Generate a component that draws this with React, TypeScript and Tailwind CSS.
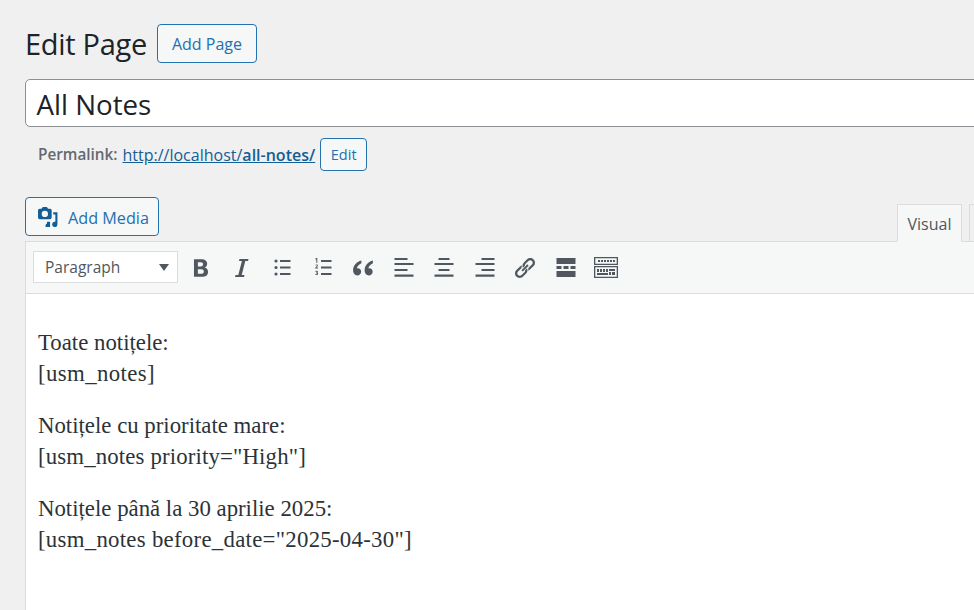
const uiFont = "font-['Open_Sans',sans-serif]";

function Icon({ children, className = "" }: { children: React.ReactNode; className?: string }) {
  return (
    <svg viewBox="0 0 20 20" className={`w-5 h-5 overflow-visible fill-[#50575e] ${className}`}>
      {children}
    </svg>
  );
}

function ToolbarIcons() {
  return (
    <div className="ml-[13px] flex items-center gap-[20.500px]">
      <Icon>
        <path
          transform="translate(10 10) scale(1.45) translate(-10.850 -10.100)"
          d="M6 4h5.200c2.400 0 3.900 1.200 3.900 3.100 0 1.300-.7 2.200-1.800 2.700 1.500.4 2.400 1.500 2.400 3 0 2.200-1.700 3.400-4.300 3.400H6V4zm2.700 2.100v2.900h2c1 0 1.600-.6 1.600-1.500 0-.9-.6-1.400-1.600-1.400h-2zm0 4.900v3.100h2.300c1.100 0 1.800-.6 1.800-1.600s-.7-1.500-1.800-1.500H8.700z"
        />
      </Icon>
      <Icon>
        <path d="M7.500 1h9l-.5 2h-2.700L9.700 17h2.800l-.5 2H3l.5-2h2.800L9.900 3H7z" />
      </Icon>
      <Icon>
        <path d="M2.400 3a1.600 1.600 0 1 1 3.200 0 1.600 1.600 0 0 1-3.200 0zm5.600-1h10.500v2H8V2zM2.400 9.500a1.600 1.600 0 1 1 3.200 0 1.600 1.600 0 0 1-3.200 0zm5.600-1h10.500v2H8v-2zM2.400 16a1.600 1.600 0 1 1 3.200 0 1.600 1.600 0 0 1-3.200 0zm5.600-1h10.500v2H8v-2z" />
      </Icon>
      <Icon>
        <path d="M8 2h10.500v2H8V2zm0 6.500h10.500v2H8v-2zm0 6.500h10.500v2H8v-2z" />
        <path d="M3.300 0h1v4.800h-1V1.200l-.9.300V.6L3.300 0zM2.300 7c.3-.4.800-.6 1.300-.6.800 0 1.400.4 1.400 1.200 0 .6-.4 1-1.600 2h1.700v.9H2.200v-.8c1.400-1.300 1.800-1.700 1.800-2.100 0-.3-.2-.4-.5-.4-.3 0-.5.100-.7.400L2.300 7zM2.300 13.300c.3-.3.800-.5 1.300-.5.800 0 1.400.4 1.400 1.100 0 .4-.3.700-.6.900.4.100.7.500.7 1 0 .8-.7 1.200-1.500 1.200-.6 0-1.100-.2-1.400-.6l.5-.6c.2.200.5.400.8.400.3 0 .6-.1.600-.4 0-.3-.3-.5-.9-.5v-.8c.5 0 .8-.1.800-.4 0-.2-.2-.4-.5-.4-.3 0-.5.100-.7.300l-.5-.6z" />
      </Icon>
      <Icon>
        <path
          transform="translate(10 10) scale(1.280) translate(-10.050 -10.100)"
          d="M8.800 4.300C5.300 5.200 2.300 8 2.300 11.900c0 2.300 1.400 4 3.300 4 1.700 0 3-1.300 3-2.900 0-1.600-1.100-2.700-2.600-2.700-.3 0-.6.100-.8.100.4-1.800 1.700-3.300 3.600-4.100v-2zm9 0c-3.500.9-6.500 3.700-6.500 7.600 0 2.300 1.400 4 3.300 4 1.700 0 3-1.300 3-2.900 0-1.600-1.100-2.700-2.600-2.700-.3 0-.6.100-.8.100.4-1.800 1.700-3.300 3.600-4.100v-2z"
        />
      </Icon>
      <Icon>
        <path d="M.500 0h13v2h-13zM.500 5h19v2h-19zM.500 11h13v2h-13zM.500 16.500h19v2.300h-19z" />
      </Icon>
      <Icon>
        <path d="M4.500 0h11v2h-11zM.500 5h19v2h-19zM4.500 11h11v2h-11zM.500 16.500h19v2.300h-19z" />
      </Icon>
      <Icon>
        <path d="M6.500 0h13v2h-13zM.500 5h19v2h-19zM6.500 11h13v2h-13zM.500 16.500h19v2.300h-19z" />
      </Icon>
      <Icon>
        <path
          transform="translate(10 10) scale(1.120) translate(-10 -10)"
          d="M17.700 2.300c-1.700-1.700-4.300-1.700-6 0L9 5c-1.300 1.300-1.600 3.200-.8 4.800l1.700-1.700c-.1-.7.100-1.300.6-1.800l2.600-2.600c.9-.9 2.200-.9 3.100 0 .9.900.9 2.200 0 3.100l-2.500 2.600-.7.500c.1.800 0 1.700-.3 2.500.8-.3 1.600-.8 2.200-1.400l2.800-2.700c1.700-1.700 1.700-4.300 0-6zM11.800 10.200l-1.700 1.700c.1.700-.1 1.300-.6 1.800l-2.600 2.600c-.9.900-2.200.9-3.100 0-.9-.9-.9-2.200 0-3.100l2.500-2.600.7-.5c-.1-.8 0-1.700.3-2.500-.8.300-1.600.8-2.200 1.400l-2.800 2.700c-1.700 1.700-1.700 4.300 0 6 1.700 1.700 4.300 1.700 6 0L11 15c1.300-1.300 1.600-3.200.8-4.800zM6.800 12l5.300-5.300 1.200 1.200L8 13.200z"
        />
      </Icon>
      <Icon>
        <path d="M.500 0h19v6h-19zM.500 8h5v3h-5zM7.500 8h5v3h-5zM14.500 8h5v3h-5zM.500 13h19v6h-19z" />
      </Icon>
      <svg viewBox="0 0 24 21" className="-mx-0.5 h-[21px] w-6 fill-[#50575e]">
        <path
          fillRule="evenodd"
          d="M0 0h24v8H0V0zm1.300 1.300v5.400h21.400V1.300H1.300zM0 9h24v12H0V9zm1.300 1.300v9.400h21.400v-9.400H1.300z"
        />
        <path d="M4 3h2v2H4zM7 3h2v2H7zM10 3h2v2h-2zM13 3h2v2h-2zM16 3h2v2h-2zM19 3h2v2h-2zM3 12h2v3H3zM6 12h2v3H6zM9 12h2v3H9zM12 12h2v3h-2zM15 12h6v2h-6zM3 16h11v2H3zM15 15h2v3h-2zM18 15h3v3h-3z" />
      </svg>
    </div>
  );
}

export default function App() {
  return (
    <div className={`h-screen overflow-hidden bg-[#f0f0f1] pl-[25px] pt-6 text-[#1d2327] ${uiFont}`}>
      <div className="w-[1004px]">
        <div className="flex items-center gap-[10px]">
          <h1 className="text-[29px] leading-[39px] font-normal tracking-[-0.3px]">Edit Page</h1>
          <button className="h-[39px] w-[100px] rounded-[4px] border border-[#2271b1] bg-[#f6f7f7] text-[16px] text-[#2271b1]">
            Add Page
          </button>
        </div>

        <div className="mt-4 flex h-[48px] items-center rounded-[5px] border border-[#8c8f94] bg-white pl-[10.500px] pt-[3px] text-[27.700px] text-[#1d2327]">
          All Notes
        </div>

        <div className="mt-[11px] flex h-[33px] items-center pl-[13px] text-[15.300px] text-[#646970]">
          <strong className="font-semibold">Permalink:</strong>
          <a className="ml-[5px] text-[16px] text-[#135e96] underline">
            http://localhost/<strong className="font-semibold">all-notes/</strong>
          </a>
          <button className="ml-[5px] h-[33px] w-[47px] rounded-[4px] border border-[#2271b1] bg-[#f6f7f7] text-[14.500px] text-[#2271b1]">
            Edit
          </button>
        </div>

        <div className="mt-[26px] flex items-end justify-between">
          <button className="mb-[5px] flex h-[39px] w-[134px] items-center rounded-[4px] border border-[#2271b1] bg-[#f6f7f7] pl-[11px] pt-[3px] text-[16.200px] text-[#2271b1]">
            <svg viewBox="3 1 19 20" className="-mt-[3px] mr-[9px] h-[21px] w-[22px] fill-[#135e96]">
              <path
                fillRule="evenodd"
                d="M4.500 3.500h2l1-1.500h4l1 1.500h2a1.500 1.500 0 0 1 1.500 1.500v7a1.500 1.500 0 0 1-1.500 1.500h-10A1.500 1.500 0 0 1 3 12V5a1.500 1.500 0 0 1 1.500-1.500zM9.500 5.500a3 3 0 1 0 0 6 3 3 0 0 0 0-6z"
              />
              <path d="M17.500 7H21.500v11.500a2.500 2.500 0 1 1-2-2.400V9h-2V7zM11.500 16h3v4a2.200 2.200 0 1 1-2-2.200V18h-1v-2z" />
            </svg>
            Add Media
          </button>
          <div className="flex gap-[7px]">
            <div className="relative z-10 -mb-px flex h-[38px] w-[65px] items-center justify-center border border-[#dcdcde] border-b-[#f6f7f7] bg-[#f6f7f7] pt-[2px] text-[16px] text-[#50575e]">
              Visual
            </div>
            <div className="-mb-px h-[38px] w-[60px] border border-[#dcdcde] bg-[#f0f0f1]" />
          </div>
        </div>

        <div className="flex h-[53px] items-center border border-[#dcdcde] bg-[#f6f7f7] pl-[7px]">
          <div className="-mt-[2px] flex h-[32px] w-[145px] items-center justify-between border border-[#dcdcde] bg-white pl-[11px] pr-[8px] pt-[2px] text-[15.500px] text-[#50575e]">
            Paragraph
            <span className="h-0 w-0 border-x-[5.500px] border-t-[7px] border-x-transparent border-t-[#50575e]" />
          </div>
          <ToolbarIcons />
        </div>

        <div className="h-[400px] border-x border-[#dcdcde] bg-white pl-[12px] pt-[33px] font-['Liberation_Serif',serif] text-[22.800px] leading-[31px] text-[#2c3338]">
          <p>
            Toate notițele:
            <br />
            <span className="tracking-[0.4px]">[usm_notes]</span>
          </p>
          <p className="mt-[21px]">
            Notițele cu prioritate mare:
            <br />
            <span className="tracking-[0.15px]">[usm_notes priority="High"]</span>
          </p>
          <p className="mt-[21px]">
            Notițele până la 30 aprilie 2025:
            <br />
            <span className="tracking-[0.28px]">[usm_notes before_date="2025-04-30"]</span>
          </p>
        </div>
      </div>
    </div>
  );
}
